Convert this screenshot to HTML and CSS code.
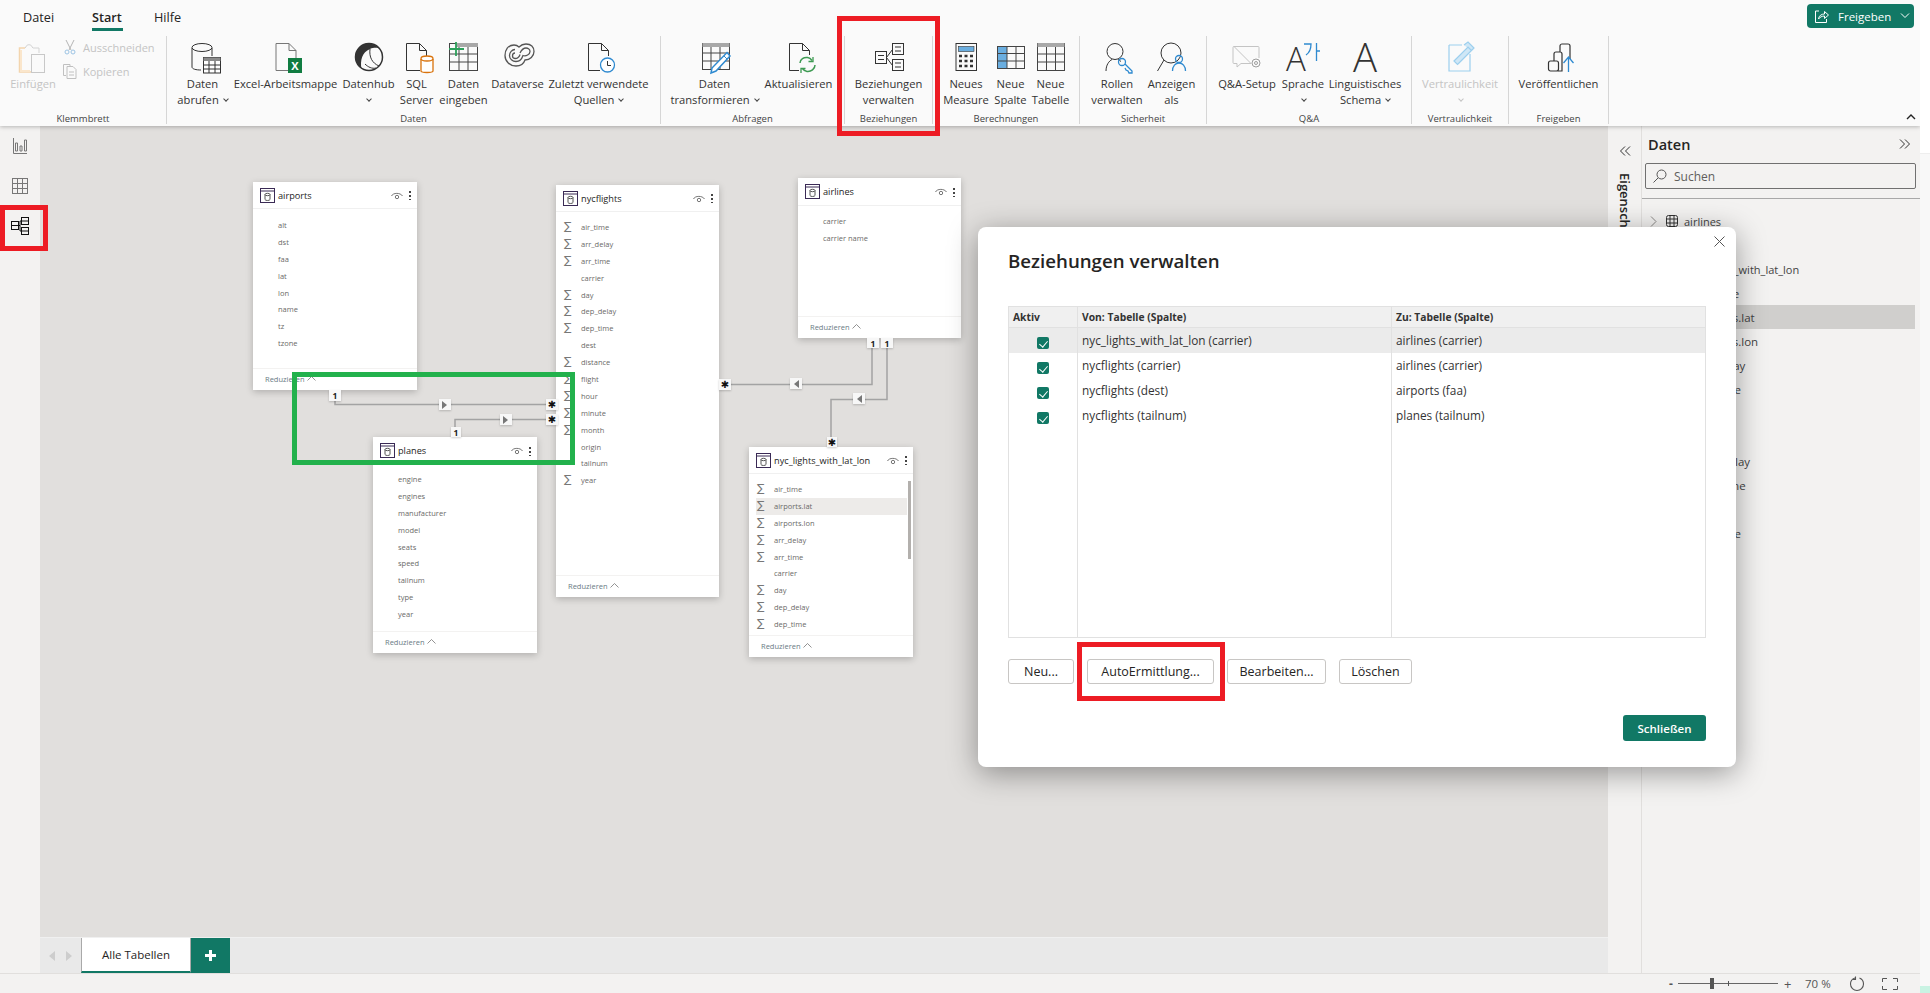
FILE: index.html
```html
<!DOCTYPE html>
<html lang="de">
<head>
<meta charset="utf-8">
<title>Beziehungen verwalten</title>
<link rel="stylesheet" href="styles.css">
</head>
<body>
<div class="app">
  <header class="ribbon">
    <div class="menu">
      <span class="m-tab m-datei">Datei</span>
      <span class="m-tab m-start">Start</span>
      <span class="m-tab m-hilfe">Hilfe</span>
      <button class="share">
        <svg width="15" height="15" viewBox="0 0 15 15" fill="none" stroke="#fff"><path d="M5 2H1.500v11.500h11V10"/><path d="M4.500 10c.5-3.500 3-5 6-5V2.500L14.500 6 10.500 9.500V7c-2.500 0-4.500 1-6 3z"/></svg>
        <span>Freigeben</span>
        <svg width="10" height="6" viewBox="0 0 10 6" fill="none" stroke="#fff"><path d="M1 .5l4 4 4-4"/></svg>
      </button>
    </div>
    <div class="groups">
      <section class="group g-klemm">
        <div class="g-body clip">
          <div class="btn dis w-paste">
            <svg class="ic" viewBox="0 0 32 32" fill="none"><path d="M8 6H2.500v24H14" stroke="#f3d5ae" stroke-width="1.500"/><path d="M8 6l1-1c0-3 6-3 6 0l1 1h6v5" stroke="#d4d4d4"/><path d="M4 8v21h9" stroke="#fae6cc" stroke-width="2"/><rect x="14.500" y="12.500" width="13" height="18" fill="#fafafa" stroke="#c8c8c8"/></svg>
            <span class="lbl">Einfügen</span>
          </div>
          <div class="clip-side dis">
            <div class="clip-row">
              <svg width="16" height="16" viewBox="0 0 16 16" fill="none" stroke="#b5b5b5"><path d="M4 1l5 10M12 1L7 11"/><circle cx="5" cy="13" r="2" stroke="#9cc4e4"/><circle cx="11" cy="13" r="2" stroke="#9cc4e4"/></svg>
              <span>Ausschneiden</span>
            </div>
            <div class="clip-row">
              <svg width="16" height="16" viewBox="0 0 16 16" fill="none" stroke="#c0c0c0"><path d="M4 12.500H1.500v-11H8V3"/><path d="M5 3.500h6l3 3v9H5zM7 9h5M7 12h5"/></svg>
              <span>Kopieren</span>
            </div>
          </div>
        </div>
        <div class="g-label">Klemmbrett</div>
      </section>
      <section class="group g-daten">
        <div class="g-body">
          <div class="btn w56">
            <svg class="ic" viewBox="0 0 32 32" fill="none" stroke="#333"><path d="M5 6v19c0 2 4 3 9 3M25 6v8"/><ellipse cx="15" cy="5.500" rx="10" ry="4"/><rect x="16.500" y="15.500" width="17" height="15.500" fill="#fff"/><rect x="16.500" y="15.500" width="17" height="3.500" fill="#8a8a8a" stroke="none"/><path d="M16.500 23h17M16.500 27h17M22 19v12M28 19v12"/></svg>
            <span class="lbl">Daten<br>abrufen <i class="chev"></i></span>
          </div>
          <div class="btn w110">
            <svg class="ic" viewBox="0 0 32 32" fill="none" stroke="#777"><path d="M6 1.500h13l7 7v20H6z"/><path d="M19 1.500v7h7"/><rect x="18" y="16" width="14" height="15" fill="#107c41" stroke="none"/><text x="25" y="27.500" class="xl">X</text></svg>
            <span class="lbl">Excel-Arbeitsmappe</span>
          </div>
          <div class="btn w56">
            <svg class="ic" viewBox="0 0 32 32" fill="none"><circle cx="16" cy="15" r="13.500" stroke="#333" stroke-width="1.500"/><path d="M13 1.500C6 3 2 9 2.500 16c.5 5 3 8.500 6 10.500C7 19 9 10 17 7c5-2 8-1 10 0-3-4-8-6-14-5.500z" fill="#333"/><path d="M17 7c-1 8 2 14 9 17M12 22c3 3 7 5 11 4" stroke="#333"/></svg>
            <span class="lbl">Datenhub<br><i class="chev"></i></span>
          </div>
          <div class="btn w40">
            <svg class="ic" viewBox="0 0 32 32" fill="none" stroke="#333"><path d="M19 28.500H5.500v-27h13l7 7V15"/><path d="M18.500 1.500v7h7"/><path d="M20 17v12c0 2 12 2 12 0V17" fill="#fff" stroke="#d9730d" stroke-width="1.300"/><ellipse cx="26" cy="16.500" rx="6" ry="2.500" fill="#fff" stroke="#d9730d" stroke-width="1.300"/></svg>
            <span class="lbl">SQL<br>Server</span>
          </div>
          <div class="btn w54">
            <svg class="ic" viewBox="0 0 32 32" fill="none" stroke="#444"><rect x="1.500" y="1.500" width="28" height="27"/><rect x="8" y="1" width="22" height="4" fill="#a8a8a8" stroke="none"/><path d="M1.500 12h28M1.500 20h28M11 5v23M20 5v23"/><path d="M8 0v14M1 7h15" stroke="#2ca05a" stroke-width="1.800"/></svg>
            <span class="lbl">Daten<br>eingeben</span>
          </div>
          <div class="btn w54">
            <svg class="ic" viewBox="0 0 32 32" fill="none" stroke="#555" stroke-width="1.300"><path d="M12 3C6 3 3 8 3 13.500c0 6 5 10.500 11 10.500 5 0 8-3 9-6 5 0 9-4 9-8.500C32 5 29 2 24 2c-4 0-6 2-7 3-1-1-3-2-5-2z"/><path d="M13 7.500c-3 0-5.500 3-5.500 6 0 3.500 3 6 6.500 6 4 0 6-3 7-6 3 1 7-1 7-4 0-2-2-3.500-4-3.500-3 0-5 3-6 5"/><path d="M13 11c-1.500 0-2.500 1.500-2.500 3s1.500 2.500 3 2.500 4-1.500 4.500-4"/></svg>
            <span class="lbl">Dataverse</span>
          </div>
          <div class="btn w108">
            <svg class="ic" viewBox="0 0 32 32" fill="none" stroke="#333"><path d="M17 28.500H5.500v-27h13l7 7V14"/><path d="M18.500 1.500v7h7"/><circle cx="24.500" cy="23" r="7" fill="#fff" stroke="#2f8ad0" stroke-width="1.300"/><path d="M24.500 19v4.500h3.500"/></svg>
            <span class="lbl">Zuletzt verwendete<br>Quellen <i class="chev"></i></span>
          </div>
        </div>
        <div class="g-label">Daten</div>
      </section>
      <section class="group g-abfragen">
        <div class="g-body">
          <div class="btn w92">
            <svg class="ic" viewBox="0 0 32 32" fill="none" stroke="#444"><rect x="3.500" y="1.500" width="27" height="26"/><rect x="3.500" y="1" width="27" height="4" fill="#a8a8a8" stroke="none"/><path d="M3.500 11h27M3.500 19h27M12 5v23M21 5v23"/><path d="M13 26l-1 5 5-2L31 14l-3-3.500z" fill="#fff" stroke="#2f8ad0" stroke-width="1.500"/><path d="M25 14l3 3" stroke="#2f8ad0"/></svg>
            <span class="lbl">Daten<br>transformieren <i class="chev"></i></span>
          </div>
          <div class="btn w76">
            <svg class="ic" viewBox="0 0 32 32" fill="none" stroke="#333"><path d="M16 28.500H6.500v-27h13l7 7V13"/><path d="M19.500 1.500v7h7"/><path d="M17 21c0-4 4-6 7.500-5.500 2 .3 3.500 1.500 4.500 3M32 23c0 4-4 7-8 6.500-2-.3-3.500-1.500-4.500-3" stroke="#3d9a52" stroke-width="1.500"/><path d="M30 15v4.500h-4.500M18 31v-4.500h4.500" stroke="#3d9a52" stroke-width="1.300"/></svg>
            <span class="lbl">Aktualisieren</span>
          </div>
        </div>
        <div class="g-label">Abfragen</div>
      </section>
      <section class="group g-bez">
        <div class="g-body">
          <div class="btn w87">
            <svg class="ic" viewBox="0 0 32 32" fill="none" stroke="#333"><rect x="2.500" y="9.500" width="11" height="12"/><rect x="19.500" y="1.500" width="11" height="11"/><rect x="19.500" y="17.500" width="11" height="11"/><path d="M5 13.500h6M5 17.500h6M22 5h6M22 9h6M22 21h6M22 25h6M13.500 15.500l6-8M13.500 15.500l6 8"/></svg>
            <span class="lbl">Beziehungen<br>verwalten</span>
          </div>
        </div>
        <div class="g-label">Beziehungen</div>
      </section>
      <section class="group g-ber">
        <div class="g-body">
          <div class="btn w53">
            <svg class="ic" viewBox="0 0 32 32" fill="none"><rect x="6" y="1.500" width="20.500" height="27" stroke="#333"/><rect x="8.500" y="4.500" width="15.500" height="5" fill="#6aaee0" stroke="#333" stroke-width=".6"/><path d="M9 14h3M14.500 14h3M20 14h3M9 19h3M14.500 19h3M20 19h3M9 24h3M14.500 24h3M20 24h3" stroke="#333" stroke-width="2.500"/></svg>
            <span class="lbl">Neues<br>Measure</span>
          </div>
          <div class="btn w36">
            <svg class="ic" viewBox="0 0 32 32" fill="none" stroke="#444"><rect x="2.500" y="4.500" width="27" height="22"/><rect x="3" y="5" width="9" height="21" fill="#6aaee0" stroke="none"/><path d="M2.500 11.500h27M2.500 19h27M12 4.500v22M21 4.500v22"/></svg>
            <span class="lbl">Neue<br>Spalte</span>
          </div>
          <div class="btn w44">
            <svg class="ic" viewBox="0 0 32 32" fill="none" stroke="#444"><rect x="2.500" y="1.500" width="27" height="27"/><rect x="2.500" y="1" width="27" height="4" fill="#a8a8a8" stroke="none"/><path d="M2.500 12h27M2.500 20h27M11.500 5v23M20.500 5v23"/></svg>
            <span class="lbl">Neue<br>Tabelle</span>
          </div>
        </div>
        <div class="g-label">Berechnungen</div>
      </section>
      <section class="group g-sich">
        <div class="g-body">
          <div class="btn w57">
            <svg class="ic" viewBox="0 0 32 32" fill="none" stroke="#333"><circle cx="14" cy="9.500" r="8"/><path d="M5 29c0-6 3-10 6-11.500M17 17.500c1 .5 2 1 3 2"/><circle cx="21" cy="20" r="3.500" stroke="#2f8ad0" stroke-width="1.300"/><path d="M24 22l7 7v2h-3l-1-2-2-1-1-2" stroke="#2f8ad0" stroke-width="1.300"/></svg>
            <span class="lbl">Rollen<br>verwalten</span>
          </div>
          <div class="btn w52">
            <svg class="ic" viewBox="0 0 32 32" fill="none" stroke="#333"><circle cx="15" cy="11" r="10"/><path d="M8 18L1.500 29"/><circle cx="23" cy="17" r="3.500" stroke="#2f8ad0" stroke-width="1.300"/><path d="M16.500 29c0-5 3-8 6.500-8s6.500 3 6.500 8" stroke="#2f8ad0" stroke-width="1.300"/></svg>
            <span class="lbl">Anzeigen<br>als</span>
          </div>
        </div>
        <div class="g-label">Sicherheit</div>
      </section>
      <section class="group g-qa">
        <div class="g-body">
          <div class="btn w68">
            <svg class="ic" viewBox="0 0 32 32" fill="none" stroke="#c4c4c4"><path d="M3 4.500h24a1 1 0 0 1 1 1V16M20 21.500H10l-4 3.500v-3.500H3a1 1 0 0 1-1-1V5.500a1 1 0 0 1 1-1z"/><circle cx="25" cy="21" r="4" stroke="#9e9e9e"/><circle cx="25" cy="21" r="1.500" stroke="#9e9e9e"/></svg>
            <span class="lbl">Q&amp;A-Setup</span>
          </div>
          <div class="btn w44">
            <svg class="ic" viewBox="0 0 32 32" fill="none"><text x="-1" y="29" class="big-a">A</text><path d="M17 2h7c0 5-2 9-5 11M29.500 1v18M29.500 9H33" stroke="#2f8ad0" stroke-width="1.300"/></svg>
            <span class="lbl">Sprache<br><i class="chev"></i></span>
          </div>
          <div class="btn w80">
            <svg class="ic" viewBox="0 0 32 32" fill="none"><text x="16" y="29.500" text-anchor="middle" class="huge-a">A</text></svg>
            <span class="lbl">Linguistisches<br>Schema <i class="chev"></i></span>
          </div>
        </div>
        <div class="g-label">Q&amp;A</div>
      </section>
      <section class="group g-vert">
        <div class="g-body">
          <div class="btn dis w96">
            <svg class="ic" viewBox="0 0 32 32" fill="none" stroke="#9ccfee" stroke-width="1.200"><path d="M5 3h13M5 3v26h21V12"/><path d="M10 19L24 5l3.500 3.500-14 14zM14 22l12-12M20 3l4-3 6 6-3 3" fill="#cfe7f6"/></svg>
            <span class="lbl">Vertraulichkeit<br><i class="chev"></i></span>
          </div>
        </div>
        <div class="g-label">Vertraulichkeit</div>
      </section>
      <section class="group g-frei">
        <div class="g-body">
          <div class="btn w99">
            <svg class="ic" viewBox="0 0 32 32" fill="none" stroke="#333" stroke-width="1.200"><rect x="5.500" y="19" width="10" height="10" rx="2"/><path d="M11 19v-7c0-1 1-2 2-2h4c1 0 2 1 2 2v17h-4M17 10V4c0-1 1-2 2-2h6c1 0 2 1 2 2v13"/><path d="M25.500 30V15M20.500 21l5-6 5 6" stroke="#2f8ad0" stroke-width="1.300"/></svg>
            <span class="lbl">Veröffentlichen</span>
          </div>
        </div>
        <div class="g-label">Freigeben</div>
      </section>
    </div>
    <svg class="collapse" width="10" height="6" viewBox="0 0 10 6" fill="none" stroke="#222" stroke-width="1.400"><path d="M1 5l4-4 4 4"/></svg>
  </header>

  <main class="main">
    <nav class="rail">
      <div class="rail-btn">
        <svg width="16" height="16" viewBox="0 0 16 16" fill="none" stroke="#777"><path d="M1.500 0v15.500H15"/><path d="M3.500 13V5h2v8zM8 13V8h2v5zM12.500 13V2h2v11z"/></svg>
      </div>
      <div class="rail-btn">
        <svg width="16" height="16" viewBox="0 0 16 16" fill="none" stroke="#777"><rect x=".5" y=".5" width="15" height="15"/><path d="M.5 5.500h15M.5 10.500h15M5.500.5v15M10.500.5v15"/></svg>
      </div>
      <div class="rail-btn rail-active">
        <svg width="18" height="18" viewBox="0 0 18 18" fill="none" stroke="#111"><rect x=".5" y="4.500" width="7" height="8"/><rect x="10.500" y=".5" width="7" height="7"/><rect x="10.500" y="10.500" width="7" height="7"/><path d="M.5 8.500h7M10.500 4h7M10.500 14h7M7.500 8.500H9V4h1.500M9 8.500V14h1.500"/></svg>
      </div>
    </nav>

    <div class="center">
      <div class="canvas">
        <svg class="lines" width="1568" height="811" viewBox="40 126 1568 811" fill="none" stroke="#a3a3a3" stroke-width="1.500">
          <path d="M335 400v4.500h211"/>
          <path d="M455 427v-7.500h91"/>
          <path d="M730 384.500h142V348"/>
          <path d="M887 348v51.500h-56V437"/>
        </svg>

        <article class="card c-airports">
          <div class="c-head"><svg class="t-ic" viewBox="0 0 15 15" fill="none" stroke="#3a2a55"><rect x=".5" y=".5" width="14" height="14"/><path d="M.5 3h14"/><path d="M5 6.500v5c0 1.300 5 1.300 5 0v-5" stroke="#555"/><ellipse cx="7.500" cy="6.500" rx="2.500" ry="1.200" stroke="#555"/></svg><span class="c-title">airports</span><svg class="eye" viewBox="0 0 12 9" fill="none" stroke="#666" stroke-width=".9"><path d="M.5 5C2 1.500 9.500 1.500 11.500 5"/><circle cx="6" cy="6" r="1.700"/></svg><span class="dots"></span></div>
          <div class="c-body">
            <div class="r"><i></i>alt</div><div class="r"><i></i>dst</div><div class="r"><i></i>faa</div><div class="r"><i></i>lat</div><div class="r"><i></i>lon</div><div class="r"><i></i>name</div><div class="r"><i></i>tz</div><div class="r"><i></i>tzone</div>
          </div>
          <div class="c-foot">Reduzieren <svg class="up" viewBox="0 0 9 5" fill="none" stroke="#777" stroke-width=".8"><path d="M.5 4.500l4-4 4 4"/></svg></div>
        </article>

        <article class="card c-flights">
          <div class="c-head"><svg class="t-ic" viewBox="0 0 15 15" fill="none" stroke="#3a2a55"><rect x=".5" y=".5" width="14" height="14"/><path d="M.5 3h14"/><path d="M5 6.500v5c0 1.300 5 1.300 5 0v-5" stroke="#555"/><ellipse cx="7.500" cy="6.500" rx="2.500" ry="1.200" stroke="#555"/></svg><span class="c-title">nycflights</span><svg class="eye" viewBox="0 0 12 9" fill="none" stroke="#666" stroke-width=".9"><path d="M.5 5C2 1.500 9.500 1.500 11.500 5"/><circle cx="6" cy="6" r="1.700"/></svg><span class="dots"></span></div>
          <div class="c-body">
            <div class="r"><i>∑</i>air_time</div><div class="r"><i>∑</i>arr_delay</div><div class="r"><i>∑</i>arr_time</div><div class="r"><i></i>carrier</div><div class="r"><i>∑</i>day</div><div class="r"><i>∑</i>dep_delay</div><div class="r"><i>∑</i>dep_time</div><div class="r"><i></i>dest</div><div class="r"><i>∑</i>distance</div><div class="r"><i>∑</i>flight</div><div class="r"><i>∑</i>hour</div><div class="r"><i>∑</i>minute</div><div class="r"><i>∑</i>month</div><div class="r"><i></i>origin</div><div class="r"><i></i>tailnum</div><div class="r"><i>∑</i>year</div>
          </div>
          <div class="c-foot">Reduzieren <svg class="up" viewBox="0 0 9 5" fill="none" stroke="#777" stroke-width=".8"><path d="M.5 4.500l4-4 4 4"/></svg></div>
        </article>

        <article class="card c-airlines">
          <div class="c-head"><svg class="t-ic" viewBox="0 0 15 15" fill="none" stroke="#3a2a55"><rect x=".5" y=".5" width="14" height="14"/><path d="M.5 3h14"/><path d="M5 6.500v5c0 1.300 5 1.300 5 0v-5" stroke="#555"/><ellipse cx="7.500" cy="6.500" rx="2.500" ry="1.200" stroke="#555"/></svg><span class="c-title">airlines</span><svg class="eye" viewBox="0 0 12 9" fill="none" stroke="#666" stroke-width=".9"><path d="M.5 5C2 1.500 9.500 1.500 11.500 5"/><circle cx="6" cy="6" r="1.700"/></svg><span class="dots"></span></div>
          <div class="c-body">
            <div class="r"><i></i>carrier</div><div class="r"><i></i>carrier name</div>
          </div>
          <div class="c-foot">Reduzieren <svg class="up" viewBox="0 0 9 5" fill="none" stroke="#777" stroke-width=".8"><path d="M.5 4.500l4-4 4 4"/></svg></div>
        </article>

        <article class="card c-lights">
          <div class="c-head"><svg class="t-ic" viewBox="0 0 15 15" fill="none" stroke="#3a2a55"><rect x=".5" y=".5" width="14" height="14"/><path d="M.5 3h14"/><path d="M5 6.500v5c0 1.300 5 1.300 5 0v-5" stroke="#555"/><ellipse cx="7.500" cy="6.500" rx="2.500" ry="1.200" stroke="#555"/></svg><span class="c-title">nyc_lights_with_lat_lon</span><svg class="eye" viewBox="0 0 12 9" fill="none" stroke="#666" stroke-width=".9"><path d="M.5 5C2 1.500 9.500 1.500 11.500 5"/><circle cx="6" cy="6" r="1.700"/></svg><span class="dots"></span></div>
          <div class="c-body">
            <div class="r"><i>∑</i>air_time</div><div class="r r-hi"><i>∑</i>airports.lat</div><div class="r"><i>∑</i>airports.lon</div><div class="r"><i>∑</i>arr_delay</div><div class="r"><i>∑</i>arr_time</div><div class="r"><i></i>carrier</div><div class="r"><i>∑</i>day</div><div class="r"><i>∑</i>dep_delay</div><div class="r"><i>∑</i>dep_time</div>
            <span class="scroll"></span>
          </div>
          <div class="c-foot">Reduzieren <svg class="up" viewBox="0 0 9 5" fill="none" stroke="#777" stroke-width=".8"><path d="M.5 4.500l4-4 4 4"/></svg></div>
        </article>

        <article class="card c-planes">
          <div class="c-head"><svg class="t-ic" viewBox="0 0 15 15" fill="none" stroke="#3a2a55"><rect x=".5" y=".5" width="14" height="14"/><path d="M.5 3h14"/><path d="M5 6.500v5c0 1.300 5 1.300 5 0v-5" stroke="#555"/><ellipse cx="7.500" cy="6.500" rx="2.500" ry="1.200" stroke="#555"/></svg><span class="c-title">planes</span><svg class="eye" viewBox="0 0 12 9" fill="none" stroke="#666" stroke-width=".9"><path d="M.5 5C2 1.500 9.500 1.500 11.500 5"/><circle cx="6" cy="6" r="1.700"/></svg><span class="dots"></span></div>
          <div class="c-body">
            <div class="r"><i></i>engine</div><div class="r"><i></i>engines</div><div class="r"><i></i>manufacturer</div><div class="r"><i></i>model</div><div class="r"><i></i>seats</div><div class="r"><i></i>speed</div><div class="r"><i></i>tailnum</div><div class="r"><i></i>type</div><div class="r"><i></i>year</div>
          </div>
          <div class="c-foot">Reduzieren <svg class="up" viewBox="0 0 9 5" fill="none" stroke="#777" stroke-width=".8"><path d="M.5 4.500l4-4 4 4"/></svg></div>
        </article>

        <span class="tag t-a1">1</span>
        <span class="tag arrow-r t-a2"></span>
        <span class="tag star t-s1">✱</span>
        <span class="tag star t-s2">✱</span>
        <span class="tag arrow-r t-a3"></span>
        <span class="tag t-p1">1</span>
        <span class="tag star t-s3">✱</span>
        <span class="tag arrow-l t-a4"></span>
        <span class="tag t-l1">1</span>
        <span class="tag t-l2">1</span>
        <span class="tag arrow-l t-a5"></span>
        <span class="tag star t-s4">✱</span>
      </div>
      <div class="tabs">
        <span class="tab-nav"><i class="tri-l"></i><i class="tri-r"></i></span>
        <span class="tab">Alle Tabellen</span>
        <span class="tab-add"><svg width="11" height="11" viewBox="0 0 11 11" fill="#fff"><path d="M4 0h3v4h4v3H7v4H4V7H0V4h4z"/></svg></span>
      </div>
    </div>

    <aside class="props">
      <svg width="12" height="10" viewBox="0 0 12 10" fill="none" stroke="#333"><path d="M6 .5L1.500 5 6 9.500M11 .5L6.500 5 11 9.500"/></svg>
      <span class="props-title">Eigenschaften</span>
    </aside>

    <aside class="data">
      <div class="data-head"><span>Daten</span><svg width="12" height="10" viewBox="0 0 12 10" fill="none" stroke="#333"><path d="M1 .5L5.500 5 1 9.500M6 .5L10.500 5 6 9.500"/></svg></div>
      <div class="search"><svg width="14" height="14" viewBox="0 0 14 14" fill="none" stroke="#555"><circle cx="8.500" cy="5.500" r="4.500"/><path d="M5 9l-4.500 4.500"/></svg><span>Suchen</span></div>
      <div class="tree">
        <div class="tr"><svg class="tw" width="7" height="11" viewBox="0 0 7 11" fill="none" stroke="#8a8886"><path d="M1 .5l5 5-5 5"/></svg><svg class="tg" width="12" height="12" viewBox="0 0 12 12" fill="none" stroke="#333"><rect x=".5" y=".5" width="11" height="11" rx="2"/><path d="M.5 4h11M.5 8h11M4 .5v11M8 .5v11"/></svg><span>airlines</span></div>
        <div class="tr"><svg class="tw" width="7" height="11" viewBox="0 0 7 11" fill="none" stroke="#8a8886"><path d="M1 .5l5 5-5 5"/></svg><svg class="tg" width="12" height="12" viewBox="0 0 12 12" fill="none" stroke="#333"><rect x=".5" y=".5" width="11" height="11" rx="2"/><path d="M.5 4h11M.5 8h11M4 .5v11M8 .5v11"/></svg><span>airports</span></div>
        <div class="tr"><svg class="tw" width="7" height="11" viewBox="0 0 7 11" fill="none" stroke="#8a8886"><path d="M1 .5l5 5-5 5"/></svg><svg class="tg" width="12" height="12" viewBox="0 0 12 12" fill="none" stroke="#333"><rect x=".5" y=".5" width="11" height="11" rx="2"/><path d="M.5 4h11M.5 8h11M4 .5v11M8 .5v11"/></svg><span>nyc_lights_with_lat_lon</span></div>
        <div class="tr tr-sub">air_time</div>
        <div class="tr tr-sub tr-hi">airports.lat</div>
        <div class="tr tr-sub">airports.lon</div>
        <div class="tr tr-sub">arr_delay</div>
        <div class="tr tr-sub">arr_time</div>
        <div class="tr tr-sub">carrier</div>
        <div class="tr tr-sub">day</div>
        <div class="tr tr-sub">dep_delay</div>
        <div class="tr tr-sub">dep_time</div>
        <div class="tr tr-sub">dest</div>
        <div class="tr tr-sub">distance</div>
      </div>
    </aside>
  </main>

  <footer class="status">
    <span class="z-minus">-</span>
    <span class="slider"><i class="s-thumb"></i><i class="s-tick"></i></span>
    <span class="z-plus">+</span>
    <span class="z-val">70 %</span>
    <svg class="z-reset" width="16" height="16" viewBox="0 0 16 16" fill="none" stroke="#555" stroke-width="1.100"><path d="M6 2C3 3 1.500 5.500 1.500 8c0 3.500 3 6.500 6.500 6.500s6.500-3 6.500-6.500c0-2.500-1.500-5-4-6"/><path d="M6.500 .5V3.500H4"/></svg>
    <svg class="z-fit" width="16" height="12" viewBox="0 0 16 12" fill="none" stroke="#555"><path d="M.5 4V.5H5M11 .5h4.500V4M15.500 8v3.500H11M5 11.500H.5V8"/></svg>
  </footer>

  <section class="modal">
    <svg class="modal-x" width="11" height="11" viewBox="0 0 11 11" fill="none" stroke="#555"><path d="M.5.5l10 10M10.500.5l-10 10"/></svg>
    <h1 class="modal-title">Beziehungen verwalten</h1>
    <table class="rels">
      <thead><tr><th class="col-a">Aktiv</th><th class="col-b">Von: Tabelle (Spalte)</th><th>Zu: Tabelle (Spalte)</th></tr></thead>
      <tbody>
        <tr class="sel"><td><span class="chk"></span></td><td>nyc_lights_with_lat_lon (carrier)</td><td>airlines (carrier)</td></tr>
        <tr><td><span class="chk"></span></td><td>nycflights (carrier)</td><td>airlines (carrier)</td></tr>
        <tr><td><span class="chk"></span></td><td>nycflights (dest)</td><td>airports (faa)</td></tr>
        <tr><td><span class="chk"></span></td><td>nycflights (tailnum)</td><td>planes (tailnum)</td></tr>
        <tr class="fill"><td></td><td></td><td></td></tr>
      </tbody>
    </table>
    <div class="m-btns">
      <button class="mb b-neu">Neu...</button>
      <button class="mb b-auto">AutoErmittlung...</button>
      <button class="mb b-edit">Bearbeiten...</button>
      <button class="mb b-del">Löschen</button>
    </div>
    <div class="m-close"><button class="primary">Schließen</button></div>
  </section>

  <span class="mark red m-bez"></span>
  <span class="mark red m-rail"></span>
  <span class="mark red m-auto"></span>
  <span class="mark green m-green"></span>
</div>
<div class="edge"><span class="edge-top"></span><span class="edge-mid"></span><span class="edge-end"></span></div>
</body>
</html>
```

FILE: styles.css
```css
* { box-sizing: border-box; }
html, body { margin: 0; padding: 0; background: #fff; overflow: hidden; }
body { display: flex; height: 993px; font-family: "Open Sans", "Noto Sans", sans-serif; color: #252423; }
.app { position: relative; width: 1920px; height: 993px; flex: none; display: flex; flex-direction: column; background: #f3f2f1; overflow: hidden; }
.edge { flex: 1; display: flex; flex-direction: column; }
.edge-top { height: 154px; background: #fff; border-bottom: 1px solid #eee; }
.edge-mid { flex: 1; background: #f8f8f8; }
.edge-end { height: 7px; background: #c9f3e3; }

/* ribbon */
.ribbon { position: relative; z-index: 3; height: 126px; flex: none; background: #fafafa; box-shadow: 0 1px 4px rgba(0,0,0,.25); }
.menu { height: 36px; display: flex; align-items: flex-start; padding-left: 23px; }
.m-tab { font-size: 12.7px; line-height: 18px; margin-top: 8px; height: 23px; }
.m-datei { width: 32px; }
.m-start { width: 31px; margin-left: 37px; font-weight: 600; border-bottom: 3px solid #117865; }
.m-hilfe { width: 30px; margin-left: 31px; }
.share { margin: 4px 6px 0 auto; width: 107px; height: 24px; background: #117865; color: #fff; border: 0; border-radius: 4px; display: flex; align-items: center; gap: 9px; padding: 0 0 0 7px; font: 11.5px "Open Sans", sans-serif; }
.groups { display: flex; height: 88px; }
.group { display: flex; flex-direction: column; border-right: 1px solid #d6d6d6; height: 88px; }
.g-klemm { width: 167px; }
.g-daten { width: 494px; }
.g-abfragen { width: 184px; }
.g-bez { width: 88px; }
.g-ber { width: 147px; }
.g-sich { width: 127px; }
.g-qa { width: 205px; }
.g-vert { width: 97px; }
.g-frei { width: 100px; }
.g-body { height: 79px; display: flex; justify-content: center; }
.g-label { font-size: 9.5px; line-height: 10px; text-align: center; color: #444; }
.btn { display: flex; flex-direction: column; align-items: center; padding-top: 6px; font-size: 11.2px; line-height: 16px; color: #333; flex: none; }
.ic { width: 32px; height: 32px; flex: none; overflow: visible; margin-bottom: 2px; }
.lbl { text-align: center; white-space: nowrap; }
.chev { display: inline-block; width: 4px; height: 4px; border: solid #444; border-width: 0 1px 1px 0; transform: rotate(45deg); margin: 0 0 3px 2px; }
.w36 { width: 36px; } .w40 { width: 40px; } .w44 { width: 44px; } .w52 { width: 52px; } .w53 { width: 53px; } .w54 { width: 54px; } .w56 { width: 56px; } .w57 { width: 57px; } .w68 { width: 68px; } .w76 { width: 76px; } .w80 { width: 80px; } .w87 { width: 87px; } .w92 { width: 92px; } .w96 { width: 96px; } .w99 { width: 99px; } .w108 { width: 108px; } .w110 { width: 110px; }
.dis, .dis .lbl { color: #c4c4c4; }
.dis .chev { border-color: #c4c4c4; }
.clip { justify-content: flex-start; padding-left: 6px; }
.w-paste { width: 54px; }
.clip-side { padding: 3px 0 0 2px; font-size: 11px; display: flex; flex-direction: column; gap: 8px; }
.clip-row { display: flex; align-items: center; gap: 5px; height: 16px; }
.xl { fill: #fff; stroke: none; font: 700 11px "Open Sans", sans-serif; text-anchor: middle; }
.big-a { fill: #333; font: 300 33px "Open Sans", sans-serif; }
.huge-a { fill: #333; font: 300 40px "Open Sans", sans-serif; }
.collapse { position: absolute; right: 4px; top: 114px; }

/* main */
.main { flex: 1; min-height: 0; display: flex; }
.rail { width: 40px; flex: none; display: flex; flex-direction: column; background: #f3f2f1; }
.rail-btn { position: relative; height: 40px; display: flex; align-items: center; justify-content: center; }
.rail-active::before { content: ""; position: absolute; left: 2px; top: 4px; bottom: 0; width: 2px; background: #117865; }
.center { width: 1568px; flex: none; display: flex; flex-direction: column; }
.canvas { position: relative; flex: 1; background: #e1dfdd; overflow: hidden; }
.lines { position: absolute; left: 0; top: 0; }

.card { position: absolute; display: flex; flex-direction: column; background: #fff; box-shadow: 0 2px 7px rgba(0,0,0,.22); }
.c-airports { left: 213px; top: 56px; width: 164px; height: 208px; }
.c-flights { left: 516px; top: 59px; width: 163px; height: 412px; }
.c-airlines { left: 758px; top: 52px; width: 163px; height: 160px; }
.c-lights { left: 709px; top: 321px; width: 164px; height: 210px; }
.c-planes { left: 333px; top: 311px; width: 164px; height: 216px; }
.c-head { height: 27px; flex: none; display: flex; align-items: center; padding: 0 5px 0 7px; border-bottom: 1px solid #f0f0f0; }
.c-airlines .c-head, .c-planes .c-head { height: 28px; }
.t-ic { width: 15px; height: 15px; flex: none; margin-right: 3px; }
.c-title { flex: 1; font-size: 9.2px; color: #252423; white-space: nowrap; font-weight: 500; }
.eye { width: 12px; height: 9px; flex: none; margin-right: 6px; }
.dots { width: 2px; height: 10px; flex: none; margin-right: 1px; background: radial-gradient(circle, #444 1px, transparent 1.100px) 0 0 / 2px 4px repeat-y; }
.c-body { position: relative; flex: 1; min-height: 0; padding: 7px 6px 0 7px; overflow: hidden; }
.c-airports .c-body { padding-top: 8px; }
.c-planes .c-body { padding-top: 6px; }
.r { height: 16.9px; line-height: 16.9px; font-size: 7.5px; color: #6b6a68; display: flex; white-space: nowrap; }
.r i { width: 18px; flex: none; font-style: normal; font-size: 11px; color: #777; padding-left: 1px; font-family: "DejaVu Sans", sans-serif; }
.r-hi { background: #edebe9; }
.scroll { position: absolute; right: 2px; top: 7px; width: 3px; height: 78px; background: #b3b0ad; }
.c-foot { height: 22px; flex: none; padding-left: 12px; border-top: 1px solid #f3f2f1; font-size: 7.5px; line-height: 21px; color: #6a7b84; }
.up { width: 9px; height: 5px; margin-left: 1px; vertical-align: 1px; }

.tag { position: absolute; width: 12px; height: 11px; background: #f7f7f7; box-shadow: 0 1px 2px rgba(0,0,0,.2); font-size: 8.5px; font-weight: 700; line-height: 11px; text-align: center; color: #222; }
.star { font-family: "DejaVu Sans", sans-serif; font-size: 10px; color: #111; font-weight: 400; }
.arrow-r::before, .arrow-l::before { content: ""; position: absolute; top: 1.500px; border: 4px solid transparent; }
.arrow-r::before { left: 3px; border-left: 5px solid #777; border-right-width: 0; }
.arrow-l::before { right: 3px; border-right: 5px solid #777; border-left-width: 0; }
.t-a1 { left: 289px; top: 264px; }
.t-a2 { left: 399px; top: 273px; }
.t-s1 { left: 506px; top: 273px; }
.t-s2 { left: 506px; top: 288px; }
.t-a3 { left: 460px; top: 288px; }
.t-p1 { left: 411px; top: 301px; width: 10px; height: 10px; }
.t-s3 { left: 679px; top: 253px; }
.t-a4 { left: 750px; top: 252px; }
.t-l1 { left: 827px; top: 212px; height: 10px; }
.t-l2 { left: 841px; top: 212px; height: 10px; }
.t-a5 { left: 813px; top: 267px; }
.t-s4 { left: 787px; top: 311px; width: 10px; height: 10px; }

/* page tabs */
.tabs { height: 36px; flex: none; display: flex; background: #e9e9e9; border-top: 1px solid #f0f0f0; }
.tab-nav { width: 41px; display: flex; align-items: center; justify-content: space-around; padding: 0 3px; }
.tri-l, .tri-r { width: 0; height: 0; border: 5px solid transparent; }
.tri-l { border-right: 6px solid #cdcdcd; border-left-width: 0; }
.tri-r { border-left: 6px solid #cdcdcd; border-right-width: 0; }
.tab { width: 110px; background: #fff; border: solid #a9a9a9; border-width: 0 1px; border-bottom: 2px solid #117865; font-size: 11.5px; line-height: 34px; text-align: center; color: #252423; }
.tab-add { width: 39px; background: #117865; display: flex; align-items: center; justify-content: center; }

/* side panes */
.props { width: 33px; flex: none; display: flex; flex-direction: column; align-items: center; padding-top: 20px; background: #f3f2f1; }
.props-title { writing-mode: vertical-rl; font-size: 13px; font-weight: 600; margin-top: 17px; color: #252423; }
.data { width: 279px; flex: none; border-left: 1px solid #e1dfdd; background: #f3f2f1; }
.data-head { height: 37px; display: flex; align-items: center; justify-content: space-between; padding: 1px 9px 2px 6px; font-size: 14.5px; font-weight: 600; }
.search { margin: 0 4px 0 3px; height: 26px; border: 1px solid #707070; border-radius: 2px; display: flex; align-items: center; gap: 7px; padding-left: 7px; font-size: 12px; color: #605e5c; }
.tree { margin-top: 9px; border-top: 1px solid #a8a8a8; padding-top: 10px; }
.tr { height: 24px; margin-right: 5px; display: flex; align-items: center; font-size: 11px; color: #444; padding-left: 8px; white-space: nowrap; }
.tw { margin-right: 9px; }
.tg { margin-right: 6px; }
.tr-sub { padding-left: 54px; font-size: 11.5px; }
.tr-hi { background: #d0cfcd; }

/* status */
.status { height: 20px; flex: none; display: flex; align-items: center; border-top: 1px solid #e1dfdd; background: #f3f2f1; padding-left: 1669px; color: #555; font-size: 12px; }
.z-minus { width: 9px; font-weight: 700; }
.slider { position: relative; width: 100px; height: 1px; background: #666; }
.s-thumb { position: absolute; left: 32px; top: -5px; width: 4px; height: 11px; background: #555; }
.s-tick { position: absolute; left: 50px; top: -2px; width: 1px; height: 5px; background: #555; }
.z-plus { margin-left: 6px; width: 12px; font-size: 13px; }
.z-val { margin-left: 9px; width: 44px; font-size: 11.5px; }
.z-reset { margin-right: 17px; }

/* modal */
.modal { position: absolute; z-index: 4; left: 978px; top: 227px; width: 758px; height: 540px; padding: 19px 30px 0; background: #fff; border-radius: 8px; box-shadow: 0 6px 30px rgba(0,0,0,.38); }
.modal-x { position: absolute; right: 11px; top: 9px; }
.modal-title { margin: 0; font-size: 18.7px; line-height: 30px; font-weight: 600; color: #252423; }
.rels { margin-top: 30px; width: 698px; height: 332px; border-collapse: collapse; table-layout: fixed; font-size: 11.8px; color: #333; }
.rels th { height: 21px; background: #f0f0f0; font-size: 10.3px; text-align: left; padding: 0 4px; border: 1px solid #e1e1e1; font-weight: 700; color: #333; }
.col-a { width: 69px; }
.col-b { width: 314px; }
.rels td { height: 25px; padding: 0 4px; border-left: 1px solid #e1e1e1; border-right: 1px solid #e1e1e1; vertical-align: top; line-height: 25px; }
.rels td:first-child { text-align: center; }
.rels .fill td { height: auto; border-bottom: 1px solid #e1e1e1; }
.sel td { background: #ebebeb; }
.chk { display: inline-block; position: relative; top: 4px; width: 12px; height: 12px; border-radius: 2px; background: #117865; }
.chk::after { content: ""; position: absolute; left: 4px; top: 1.500px; width: 4px; height: 7px; border: solid #fff; border-width: 0 1.500px 1.500px 0; transform: rotate(40deg); }
.m-btns { display: flex; gap: 13px; margin-top: 21px; }
.mb { height: 25px; padding: 0; background: #fff; border: 1px solid #c8c6c4; border-radius: 3px; font: 12.5px "Open Sans", sans-serif; color: #252423; }
.b-neu { width: 66px; }
.b-auto { width: 127px; }
.b-edit { width: 99px; }
.b-del { width: 73px; }
.m-close { display: flex; justify-content: flex-end; margin-top: 31px; }
.primary { width: 83px; height: 26px; border: 0; border-radius: 3px; background: #117865; color: #fff; font: 600 11.5px "Open Sans", sans-serif; }

/* annotation boxes */
.mark { position: absolute; z-index: 5; border-style: solid; border-width: 5px; pointer-events: none; }
.red { border-color: #ed1c24; }
.green { border-color: #22b14c; }
.m-bez { left: 837px; top: 16px; width: 103px; height: 120px; }
.m-rail { left: 0; top: 205px; width: 48px; height: 46px; }
.m-auto { left: 1077px; top: 642px; width: 148px; height: 59px; }
.m-green { left: 292px; top: 372px; width: 283px; height: 93px; }
```
